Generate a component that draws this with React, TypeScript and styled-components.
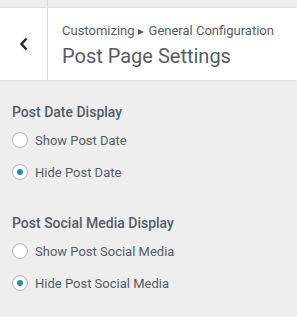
import React from "react";
import styled, { createGlobalStyle } from "styled-components";

const Global = createGlobalStyle`
  html, body { margin: 0; padding: 0; background: #eeeeee; }
  body { font-family: Roboto, "Noto Sans", sans-serif; -webkit-font-smoothing: antialiased; }
`;

const Panel = styled.div`
  width: 297px;
  height: 317px;
  background: #eeeeee;
  overflow: hidden;
`;

const TopStrip = styled.div`
  height: 7px;
  display: flex;
  border-bottom: 1px solid #dddddd;
`;

const StripCell = styled.div`
  width: 47px;
  border-right: 1px solid #dddddd;
`;

const Header = styled.div`
  display: flex;
  height: 72px;
  background: #ffffff;
  border-bottom: 1px solid #dddddd;
`;

const BackButton = styled.button`
  width: 48px;
  border: none;
  border-right: 1px solid #dddddd;
  background: #ffffff;
  padding: 0;
  display: flex;
  align-items: center;
  justify-content: center;
  color: #23282d;
`;

const Titles = styled.div`
  display: flex;
  flex-direction: column;
  padding: 14px 0 0 14px;
`;

const Crumb = styled.div`
  font-size: 13px;
  line-height: 18px;
  color: #555d66;
`;

const Arrow = styled.span`
  display: inline-block;
  width: 0;
  height: 0;
  border-top: 3.5px solid transparent;
  border-bottom: 3.5px solid transparent;
  border-left: 6px solid #555d66;
  margin: 0 5px 0 3px;
`;

const Title = styled.h2`
  margin: 3px 0 0;
  font-size: 20px;
  font-weight: 400;
  line-height: 26px;
  color: #555d66;
`;

const Section = styled.div`
  padding: 21px 12px 0 12px;
  & + & { padding-top: 25px; }
`;

const SectionTitle = styled.div`
  font-size: 14px;
  font-weight: 500;
  line-height: 20px;
  color: #555d66;
  margin-bottom: 2px;
`;

const Option = styled.label`
  display: flex;
  align-items: center;
  height: 32px;
  font-size: 13px;
  color: #555d66;
`;

const Radio = styled.span<{ $checked?: boolean }>`
  box-sizing: border-box;
  width: 16px;
  height: 16px;
  border-radius: 50%;
  border: 1px solid #b4b9be;
  background: #ffffff;
  box-shadow: inset 0 1px 2px rgba(0, 0, 0, 0.1);
  margin-right: 7px;
  display: flex;
  align-items: center;
  justify-content: center;
  &::after {
    content: "";
    display: ${(p) => (p.$checked ? "block" : "none")};
    width: 6px;
    height: 6px;
    border-radius: 50%;
    background: #1e8cbe;
  }
`;

const groups = [
  { title: "Post Date Display", options: ["Show Post Date", "Hide Post Date"], checked: 1 },
  { title: "Post Social Media Display", options: ["Show Post Social Media", "Hide Post Social Media"], checked: 1 },
];

export default function App() {
  return (
    <Panel>
      <Global />
      <TopStrip>
        <StripCell />
      </TopStrip>
      <Header>
        <BackButton aria-label="Back">
          <svg width="10" height="14" viewBox="0 0 10 14">
            <path d="M7.5 1.5 L2.5 7 L7.5 12.5" fill="none" stroke="#23282d" strokeWidth="2.4" />
          </svg>
        </BackButton>
        <Titles>
          <Crumb>
            Customizing<Arrow />General Configuration
          </Crumb>
          <Title>Post Page Settings</Title>
        </Titles>
      </Header>
      {groups.map((g) => (
        <Section key={g.title}>
          <SectionTitle>{g.title}</SectionTitle>
          {g.options.map((o, i) => (
            <Option key={o}>
              <Radio $checked={i === g.checked} />
              {o}
            </Option>
          ))}
        </Section>
      ))}
    </Panel>
  );
}
